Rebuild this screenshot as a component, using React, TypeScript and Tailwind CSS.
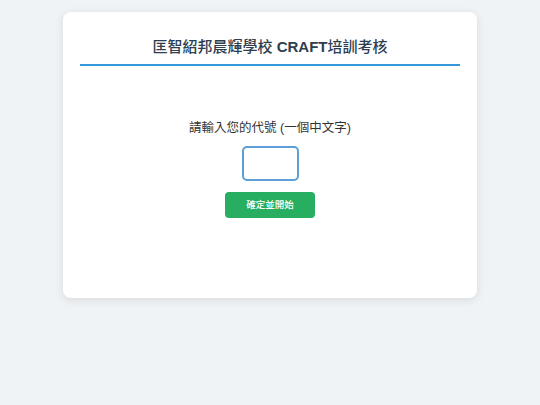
import React from "react";

export default function App() {
  const font = { fontFamily: '"Liberation Sans", "Noto Sans CJK TC", sans-serif' };
  return (
    <div className="min-h-[405px] w-full bg-[#f0f3f6] pt-[12px]" style={font}>
      <div className="mx-auto h-[286px] w-[414px] rounded-[8px] bg-white px-[17px] pt-[24px] shadow-[0_2px_10px_rgba(0,0,0,0.1)]">
        <h1 className="border-b-2 border-[#3498db] pb-[6px] text-center text-[15px] font-bold leading-[22px] text-[#2c3e50]">
          <span className="font-medium">匡智紹邦晨輝學校</span> CRAFT<span className="font-medium">培訓考核</span>
        </h1>
        <div className="flex flex-col items-center pt-[53px]">
          <p className="text-[12.5px] leading-[18px] text-[#333]">請輸入您的代號 (一個中文字)</p>
          <input
            type="text"
            className="mt-[9px] h-[35px] w-[57px] rounded-[5px] border-2 border-[#5b9fd6] text-center text-[16px] outline-none"
          />
          <button className="mt-[11px] h-[26px] w-[90px] rounded-[4px] bg-[#27ae60] text-[9.5px] font-medium text-white">
            確定並開始
          </button>
        </div>
      </div>
    </div>
  );
}
